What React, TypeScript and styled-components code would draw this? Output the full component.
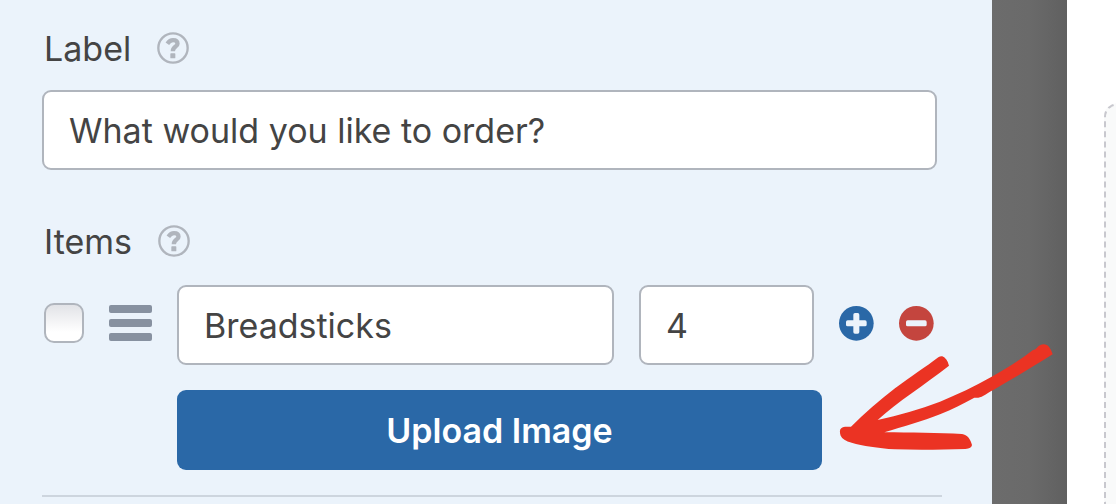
import React from "react";
import styled, { createGlobalStyle, css } from "styled-components";

const GlobalStyle = createGlobalStyle`
  *, *::before, *::after { box-sizing: border-box; }
  body {
    margin: 0;
    background: #ffffff;
    color: #444444;
    font-family: Inter, "Liberation Sans", sans-serif;
    font-size: 34px;
    font-weight: 425;
    line-height: 40px;
  }
  input, button { font: inherit; color: inherit; }
`;

const Page = styled.div`
  display: flex;
  min-height: 100vh;
  overflow: hidden;
`;

const Panel = styled.form`
  position: relative;
  z-index: 1;
  flex: 1;
  min-width: 0;
  padding: 29px 50px 7px 42px;
  background: #ebf3fb;
`;

const Gutter = styled.div`
  flex: none;
  width: 75px;
  background: linear-gradient(to right, #6c6c6c, #6a6a6a 50%, #606060);
`;

const Preview = styled.main`
  flex: none;
  display: flex;
  width: 49px;
  padding: 103px 0 0 37px;
`;

const PreviewField = styled.section`
  flex: none;
  width: 600px;
  border: 2px dashed #c8c8ce;
  border-bottom: 0;
  border-radius: 14px 14px 0 0;
  background: #f9fafa;
`;

const Group = styled.section`
  margin-right: 5px;
`;

const Heading = styled.div<{ $spaced?: boolean }>`
  display: flex;
  align-items: center;
  gap: 26px;
  padding: ${(p) => (p.$spaced ? "52px 2px 23px" : "0 2px 21px")};
`;

const HelpButton = styled.button`
  display: flex;
  margin: 0 0 3px;
  padding: 0;
  border: 0;
  background: none;
  color: #b0b5bd;
`;

const TextInput = styled.input<{ $width?: string }>`
  display: block;
  flex: ${(p) => (p.$width ? "none" : "1")};
  width: ${(p) => p.$width ?? "100%"};
  min-width: 0;
  height: 80px;
  padding: 0 25px;
  border: 2px solid #b0b5bd;
  border-radius: 9px;
  background: #ffffff;
  outline: none;
`;

const ItemRow = styled.div`
  display: flex;
  align-items: center;
  gap: 25px;
  padding: 0 3px 0 2px;
`;

const rowControl = css`
  flex: none;
  margin: 0 0 4px;
`;

const Checkbox = styled.input`
  ${rowControl}
  appearance: none;
  width: 40px;
  height: 40px;
  border: 2px solid #b0b5bd;
  border-radius: 10px;
  background: linear-gradient(#e2e3e7, #ffffff 75%);
`;

const DragHandle = styled.button`
  ${rowControl}
  display: flex;
  flex-direction: column;
  gap: 6px;
  width: 43px;
  padding: 0;
  border: 0;
  background: none;
`;

const Bar = styled.span`
  width: 100%;
  height: 8px;
  border-radius: 2px;
  background: #8791a0;
`;

const RoundButton = styled.button<{ $color: string }>`
  ${rowControl}
  display: flex;
  padding: 0;
  border: 0;
  background: none;
  color: ${(p) => p.$color};
`;

const UploadRow = styled.div`
  position: relative;
  padding: 25px 115px 25px 135px;
`;

const UploadButton = styled.button`
  display: block;
  width: 100%;
  height: 80px;
  padding: 2px 0 0;
  border: 0;
  border-radius: 9px;
  background: #2a68a7;
  color: #ffffff;
  font-weight: 600;
`;

const Arrow = styled.svg`
  position: absolute;
  top: -25px;
  right: -119px;
  width: 220px;
  height: 114px;
  fill: #eb3323;
  pointer-events: none;
`;

const Divider = styled.hr`
  height: 2px;
  margin: 0;
  border: 0;
  background: #cdd5de;
`;

function Help({ topic }: { topic: string }) {
  return (
    <HelpButton type="button" aria-label={`Help: ${topic}`}>
      <svg width="32" height="32" viewBox="0 0 96 96" fill="none" stroke="currentColor">
        <circle cx="48" cy="48" r="44" strokeWidth="7" />
        <path
          d="M31 35 C36 28 41 24.500 48 24.500 C56 24.500 61.500 28 61.500 35 C61.500 45 47.500 43 47.500 58"
          strokeWidth="13"
        />
        <rect x="40" y="64" width="15" height="15" rx="2" fill="currentColor" stroke="none" />
      </svg>
    </HelpButton>
  );
}

function RoundIcon({ plus }: { plus?: boolean }) {
  return (
    <svg width="35" height="35" viewBox="0 0 105 105">
      <circle cx="52" cy="52" r="52" fill="currentColor" />
      <rect x="21" y="43" width="62" height="18" rx="5" fill="#ebf3fb" />
      {plus && <rect x="43" y="21" width="18" height="62" rx="5" fill="#ebf3fb" />}
    </svg>
  );
}

export default function App() {
  return (
    <>
      <GlobalStyle />
      <Page>
        <Panel>
          <Group>
            <Heading>
              <label htmlFor="field-label">Label</label>
              <Help topic="label" />
            </Heading>
            <TextInput id="field-label" defaultValue="What would you like to order?" />
          </Group>
          <Group>
            <Heading $spaced>
              <label htmlFor="item-name">Items</label>
              <Help topic="items" />
            </Heading>
            <ItemRow>
              <Checkbox type="checkbox" aria-label="Selected by default" />
              <DragHandle type="button" aria-label="Reorder item">
                <Bar />
                <Bar />
                <Bar />
              </DragHandle>
              <TextInput id="item-name" defaultValue="Breadsticks" />
              <TextInput $width="175px" aria-label="Item price" defaultValue="4" />
              <RoundButton type="button" $color="#2a68a7" aria-label="Add item">
                <RoundIcon plus />
              </RoundButton>
              <RoundButton type="button" $color="#c4453e" aria-label="Remove item">
                <RoundIcon />
              </RoundButton>
            </ItemRow>
            <UploadRow>
              <UploadButton type="button">Upload Image</UploadButton>
              <Arrow viewBox="0 0 660 342" aria-hidden="true">
                <path d="M45 260 C85 220 130 182 177 145 C225 110 270 80 307 52 Q313 48 319 49 Q333 54 339 77 C303 105 265 132 227 160 C190 186 155 214 125 240 C190 226 250 208 312 185 C365 162 415 140 467 110 C515 84 560 54 590 31 C597 30 602 25 608 18 Q620 9 634 16 Q644 24 650 43 C595 78 530 116 472 150 C455 158 440 172 427 173 L415 173 C380 192 350 208 312 223 C260 244 200 260 145 277 C220 278 310 278 378 282 C394 284 404 298 408 315 Q407 325 388 327 C320 329 245 330 177 328 C125 324 80 318 47 308 Q20 301 14 287 C8 268 14 262 27 260Z" />
              </Arrow>
            </UploadRow>
          </Group>
          <Divider />
        </Panel>
        <Gutter />
        <Preview>
          <PreviewField aria-label="Form preview" />
        </Preview>
      </Page>
    </>
  );
}
